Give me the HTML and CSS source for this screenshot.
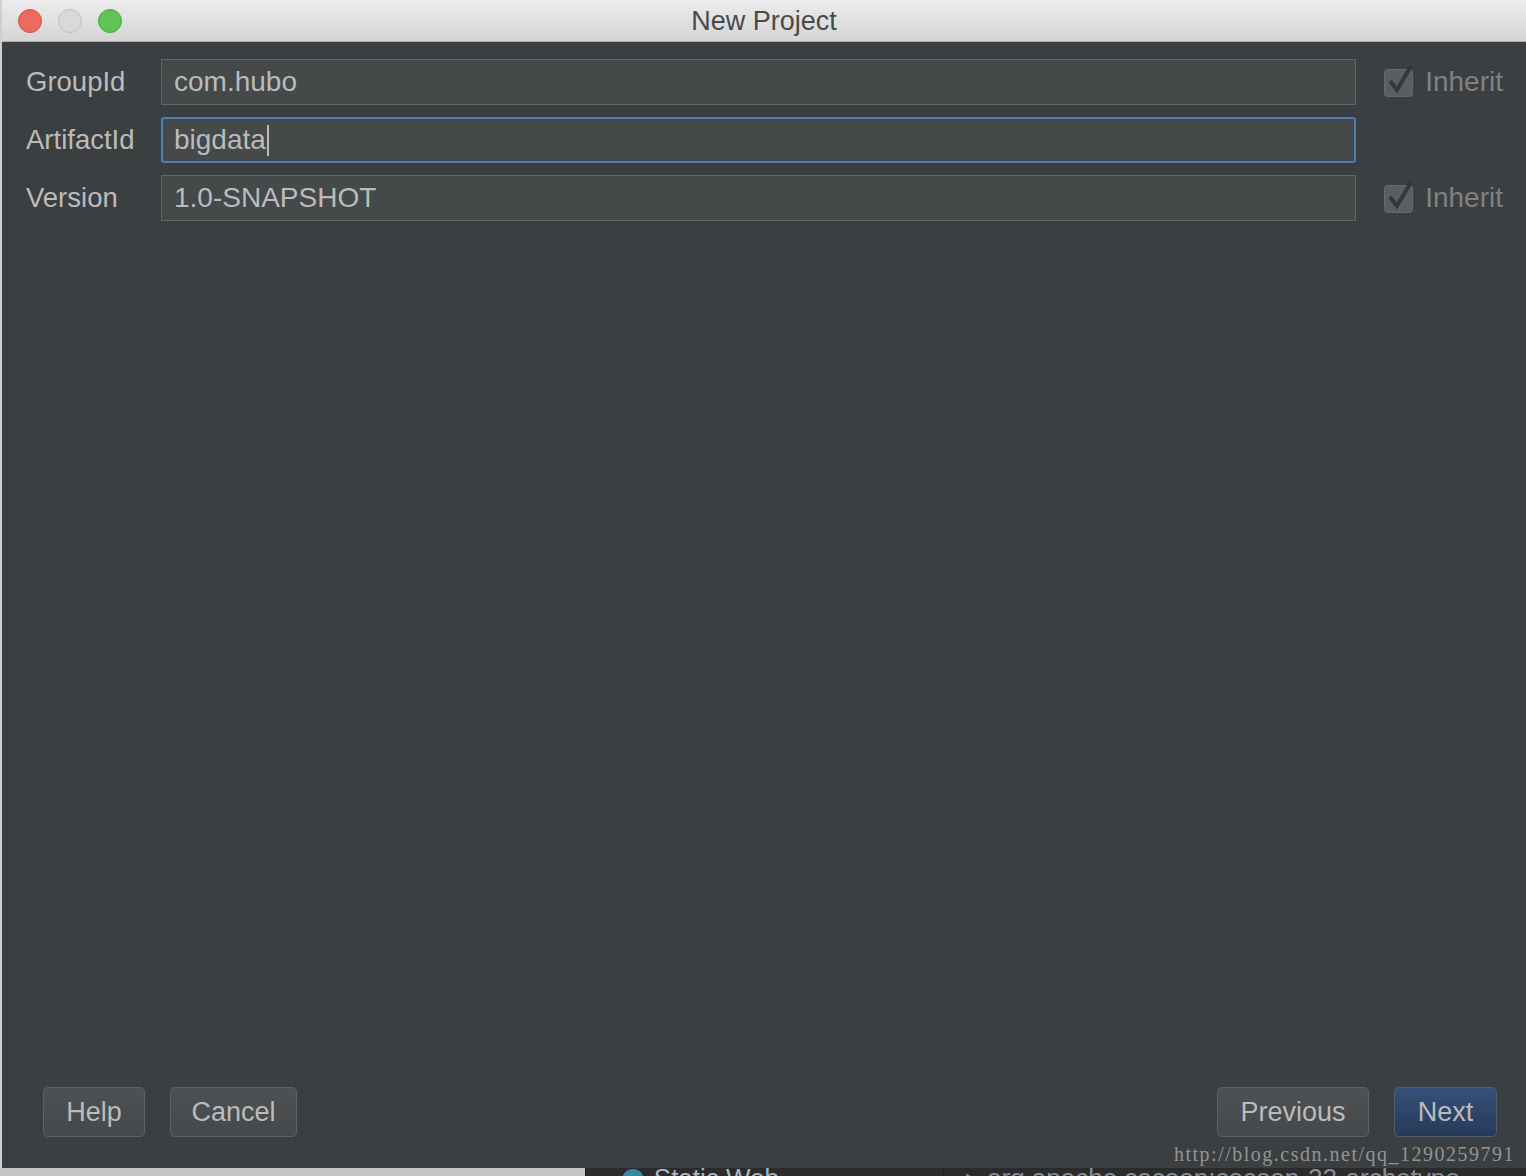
FILE: index.html
```html
<!doctype html>
<html lang="en">
  <head>
    <meta charset="UTF-8" />
    <title>New Project</title>
    <link rel="stylesheet" href="styles.css">
  </head>
  <body>
    <div class="window">
      <div class="titlebar">
        <div class="lights">
          <span class="light close"></span>
          <span class="light min"></span>
          <span class="light max"></span>
        </div>
        <div class="title">New Project</div>
      </div>
      <div class="content">
        <div class="form">
          <label class="label">GroupId</label>
          <div class="field">com.hubo</div>
          <div class="inherit">
            <svg class="check" width="32" height="34" viewBox="0 0 32 34">
              <rect x="1.5" y="6.5" width="28" height="27" rx="3" fill="#5b5e60" stroke="#676a6c" />
              <path d="M7 18 L14 27 L28 3" fill="none" stroke="#35373a" stroke-width="4" />
            </svg>
            <span>Inherit</span>
          </div>

          <label class="label">ArtifactId</label>
          <div class="field focused">bigdata<span class="caret"></span></div>
          <div></div>

          <label class="label">Version</label>
          <div class="field">1.0-SNAPSHOT</div>
          <div class="inherit">
            <svg class="check" width="32" height="34" viewBox="0 0 32 34">
              <rect x="1.5" y="6.5" width="28" height="27" rx="3" fill="#5b5e60" stroke="#676a6c" />
              <path d="M7 18 L14 27 L28 3" fill="none" stroke="#35373a" stroke-width="4" />
            </svg>
            <span>Inherit</span>
          </div>
        </div>

        <div class="buttons">
          <div class="group">
            <button class="btn help">Help</button>
            <button class="btn cancel">Cancel</button>
          </div>
          <div class="group">
            <button class="btn previous">Previous</button>
            <button class="btn next">Next</button>
          </div>
        </div>
        <div class="watermark">http://blog.csdn.net/qq_1290259791</div>
      </div>
    </div>
    <div class="desktop">
      <div class="pane light-pane"></div>
      <div class="pane tab"><span class="dot"></span><span class="cut">Static Web</span></div>
      <div class="pane tree"><span class="arrow">&#9656;</span><span class="cut">org.apache.cocoon:cocoon-22-archetype-block</span></div>
    </div>
  </body>
</html>
```

FILE: styles.css
```css
body {
  margin: 0;
  padding: 0;
  background-color: #cfcfcf;
  font-family: "Liberation Sans", Arial, sans-serif;
  overflow: hidden;
}
.window {
  margin-left: 2px;
  height: 1168px;
  display: flex;
  flex-direction: column;
  background: #3c3f41;
}
.titlebar {
  height: 41px;
  border-bottom: 1px solid #b3b3b3;
  background: linear-gradient(#ececec, #d5d5d5);
  display: flex;
  align-items: center;
  position: relative;
}
.lights {
  display: flex;
  gap: 16px;
  padding-left: 16px;
}
.light {
  width: 24px;
  height: 24px;
  border-radius: 50%;
  box-sizing: border-box;
}
.light.close {
  background: #ee6a5e;
  border: 1px solid #d5524a;
}
.light.min {
  background: #d9d9d9;
  border: 1px solid #c2c2c2;
}
.light.max {
  background: #5fc454;
  border: 1px solid #4aa83f;
}
.title {
  position: absolute;
  left: 0;
  right: 0;
  text-align: center;
  font-size: 27px;
  color: #4a4a4a;
  padding-top: 1px;
}
.content {
  flex: 1;
  display: flex;
  flex-direction: column;
  justify-content: space-between;
  position: relative;
}
.form {
  display: grid;
  grid-template-columns: 135px 1fr auto;
  row-gap: 12px;
  padding: 17px 23px 0 24px;
  align-items: center;
}
.label {
  font-size: 27.5px;
  color: #bbbbbb;
}
.field {
  height: 46px;
  box-sizing: border-box;
  background: #45494a;
  border: 1px solid #646464;
  color: #bbbbbb;
  font-size: 28px;
  padding-left: 12px;
  display: flex;
  align-items: center;
}
.field.focused {
  border: 2px solid #4a7eb4;
  padding-left: 11px;
  border-radius: 3px;
}
.caret {
  display: inline-block;
  width: 2px;
  height: 31px;
  background: #bbbbbb;
  margin-left: 1px;
}
.inherit {
  display: flex;
  align-items: center;
  gap: 10px;
  margin-left: 27px;
  color: #7f8284;
  font-size: 28px;
}
.check {
  margin-top: -4px;
}
.buttons {
  display: flex;
  justify-content: space-between;
  padding: 0 29px 31px 41px;
}
.group {
  display: flex;
  gap: 25px;
}
.btn {
  height: 50px;
  box-sizing: border-box;
  border: 1px solid #5e6162;
  border-radius: 5px;
  background: linear-gradient(#4d5153, #45494b);
  color: #bbbbbb;
  font-family: "Liberation Sans", Arial, sans-serif;
  font-size: 27px;
  padding: 0;
}
.help { width: 102px; }
.cancel { width: 127px; }
.previous { width: 152px; }
.next {
  width: 103px;
  background: linear-gradient(#36507a, #263b5a);
  border-color: #4e5c70;
}
.watermark {
  position: absolute;
  right: 11px;
  bottom: 2px;
  font-family: "Liberation Serif", "Times New Roman", serif;
  font-size: 20px;
  letter-spacing: 1.5px;
  color: #a3a3a3;
  opacity: 0.85;
}
.desktop {
  height: 8px;
  display: flex;
  background: #2b2b2b;
  overflow: hidden;
  color: #a9b7c6;
  font-size: 26px;
}
.pane {
  line-height: 26px;
  margin-top: -3px;
  display: flex;
  gap: 10px;
  align-items: flex-start;
}
.light-pane {
  width: 588px;
  background: #c4c4c4;
  margin-top: 0;
}
.tab {
  width: 323px;
  padding-left: 36px;
  border-left: 1px solid #1f1f1f;
  border-right: 1px solid #1f1f1f;
}
.dot {
  width: 22px;
  height: 22px;
  border-radius: 50%;
  background: #3d86a8;
  margin-top: 4px;
}
.tree {
  padding-left: 22px;
  color: #8a8f94;
}
.arrow {
  font-size: 22px;
}
```
